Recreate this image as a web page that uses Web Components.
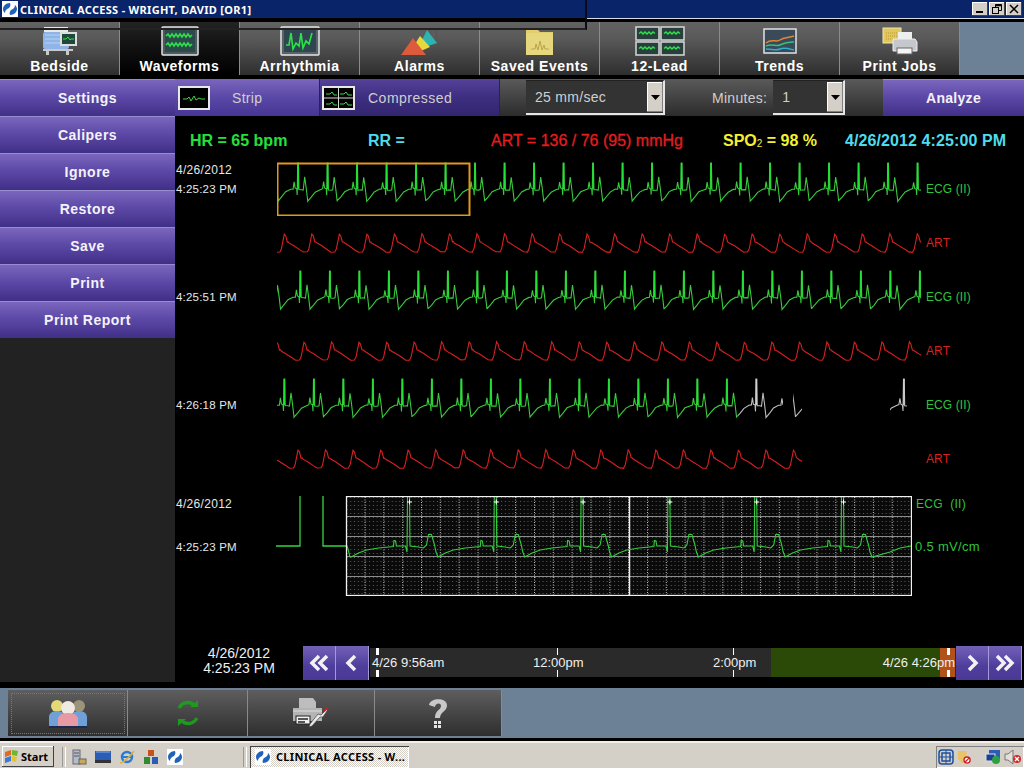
<!DOCTYPE html>
<html>
<head>
<meta charset="utf-8">
<title>Clinical Access</title>
<style>
  html, body { margin: 0; padding: 0; background: #000; height: 768px; overflow: hidden; font-family: "Liberation Sans", Arial, sans-serif; }
  .app { display: grid; grid-template-columns: 175px 849px; }
</style>
</head>
<body>
<title-bar></title-bar>
<tab-bar>
  <nav-tab label="Bedside"><svg slot="icon" width="40" height="32" viewBox="0 0 40 32"><rect x="4" y="2" width="24" height="5" fill="#e8e8e8"/><rect x="3" y="7" width="26" height="17" rx="2" fill="#8fb4e8"/><path d="M5 10h22M5 14h22M5 18h22" stroke="#b9d2f2"/><path d="M3 24h30v2H3zM6 26h3v4H6zM26 26h3v4h-3z" fill="#c9c9c9"/><rect x="20" y="7" width="17" height="14" fill="#ddd"/><rect x="22" y="9" width="13" height="10" fill="#1e4a3c"/><path d="M23 14h3l2-2 2 3 1-1h3" stroke="#3ddc4a" fill="none"/></svg></nav-tab>
  <nav-tab label="Waveforms" active><svg slot="icon" width="40" height="32" viewBox="0 0 40 32"><rect x="2" y="2" width="36" height="28" rx="1" fill="#4c5a60" stroke="#e4e4e4" stroke-width="1.5"/><rect x="5" y="5" width="30" height="22" fill="#2d4a4a"/><path d="M6 11l2-2 2 3 2-3 2 3 2-3 2 3 2-3 2 3 2-3 2 3 2-3 2 3 2-2M6 20l2-2 2 3 2-3 2 3 2-3 2 3 2-3 2 3 2-3 2 3 2-3 2 3 2-2" stroke="#2ee04a" stroke-width="1.6" fill="none"/></svg></nav-tab>
  <nav-tab label="Arrhythmia"><svg slot="icon" width="40" height="32" viewBox="0 0 40 32"><rect x="1" y="2" width="38" height="28" rx="1" fill="#5a6468" stroke="#e4e4e4" stroke-width="1.5"/><rect x="4" y="5" width="32" height="22" fill="#2f4650"/><path d="M6 20h3l2-12 2 16 3-6 3 3 2-13 2 15 3-7 3 3 3-11" stroke="#2ee04a" stroke-width="1.6" fill="none"/></svg></nav-tab>
  <nav-tab label="Alarms"><svg slot="icon" width="40" height="32" viewBox="0 0 40 32"><path d="M29 4l7 1 1 10-3 4z" fill="none" stroke="#555"/><path d="M27 5l10 13-9 3-6-6z" fill="#2fb3b0"/><path d="M20 11l10 11-9 4-6-7z" fill="#e8d83a"/><path d="M13 13L26 30H1z" fill="#dd5a3c"/></svg></nav-tab>
  <nav-tab label="Saved Events"><svg slot="icon" width="40" height="32" viewBox="0 0 40 32"><path d="M6 4h11l3 3h13v23H6z" fill="#e2cf6c"/><rect x="6" y="8" width="27" height="22" fill="#e6d67e"/><path d="M11 24h4l1-5 2 6 2-9 2 9 2-5 1 4h4" stroke="#bba44a" fill="none"/></svg></nav-tab>
  <nav-tab label="12-Lead"><svg slot="icon" width="50" height="30" viewBox="0 0 50 30"><g fill="#27403c" stroke="#d8d8d8" stroke-width="1.5"><rect x="1" y="1" width="23" height="13"/><rect x="26" y="1" width="23" height="13"/><rect x="1" y="16" width="23" height="13"/><rect x="26" y="16" width="23" height="13"/></g><path d="M4 7.500l2-1.500 2 2 2-2 2 2 2-2 2 2 2-2 2 1.500M29 7.500l2-1.500 2 2 2-2 2 2 2-2 2 2 2-2 2 1.500M4 22.500l2-1.500 2 2 2-2 2 2 2-2 2 2 2-2 2 1.500M29 22.500l2-1.500 2 2 2-2 2 2 2-2 2 2 2-2 2 1.500" stroke="#32e04c" stroke-width="1.500" fill="none"/></svg></nav-tab>
  <nav-tab label="Trends"><svg slot="icon" width="36" height="28" viewBox="0 0 36 28"><rect x="2" y="2" width="32" height="24" fill="#3a4a58" stroke="#e2e2e2" stroke-width="1.500"/><path d="M4 16c6-5 10 0 14-3s8-2 14-4" stroke="#e08830" stroke-width="1.500" fill="none"/><path d="M4 19c6-3 10 1 14-1s8-3 14-3" stroke="#38c080" stroke-width="1.500" fill="none"/><path d="M4 22c6 0 10 2 14 0s10 0 14 1" stroke="#30b0d0" stroke-width="1.500" fill="none"/></svg></nav-tab>
  <nav-tab label="Print Jobs"><svg slot="icon" width="40" height="30" viewBox="0 0 40 30"><rect x="3" y="2" width="18" height="15" fill="#e2c75c" stroke="#f0e6b0"/><path d="M6 7h12M6 10h12M6 13h12" stroke="#b99a30" stroke-dasharray="1 1"/><rect x="18" y="6" width="14" height="7" fill="#eee"/><path d="M13 13h22l2 3v9H13v-9z" fill="#c4c8cc" stroke="#eee"/><rect x="17" y="22" width="15" height="6" fill="#f4f4f4" stroke="#666"/></svg></nav-tab>
</tab-bar>
<div class="app">
  <side-menu>
    <menu-button>Settings</menu-button>
    <menu-button>Calipers</menu-button>
    <menu-button>Ignore</menu-button>
    <menu-button>Restore</menu-button>
    <menu-button>Save</menu-button>
    <menu-button>Print</menu-button>
    <menu-button>Print Report</menu-button>
  </side-menu>
  <div>
    <tool-bar></tool-bar>
    <vital-row></vital-row>
    <wave-strip kind="ecg" date="4/26/2012" time="4:25:23 PM" phase="297.7" selection></wave-strip>
    <wave-strip kind="art" phase="284.3"></wave-strip>
    <wave-strip kind="ecg" time="4:25:51 PM" phase="300"></wave-strip>
    <wave-strip kind="art" phase="304"></wave-strip>
    <wave-strip kind="ecg" time="4:26:18 PM" phase="284" gaps></wave-strip>
    <wave-strip kind="art" phase="298" stop="802"></wave-strip>
    <ecg-detail></ecg-detail>
    <time-nav></time-nav>
  </div>
</div>
<foot-bar></foot-bar>
<task-bar></task-bar>

<script>
const SIEVE = `<svg width="16" height="16" viewBox="0 0 16 16"><rect width="16" height="16" fill="#fff"/><path d="M8 2C4 2 1 5 1 8c0 2 1 3 2 4 0-3 2-4 4-5 1-1 2-3 1-5zM8 14c4 0 7-3 7-6 0-2-1-3-2-4 0 3-2 4-4 5-1 1-2 3-1 5z" fill="#1f62b8"/></svg>`

class TitleBar extends HTMLElement {
  constructor () {
    super()
    this.attachShadow({ mode: 'open' })
  }

  connectedCallback () {
    this.shadowRoot.innerHTML = `
      <style>
        :host { display: block; height: 18px; background: #0a246a; position: relative; border-bottom: 1px solid #d8dce4; }
        .bar { display: flex; align-items: center; height: 18px; padding-left: 2px; gap: 2px; color: #fff; font: bold 11px "Noto Sans", Tahoma, sans-serif; letter-spacing: .3px; }
        .btns { margin-left: auto; display: flex; margin-right: 2px; gap: 0; }
        .btns i { display: block; width: 16px; height: 14px; margin-left: 1px; background: #d4d0c8; box-shadow: inset -1px -1px #404040, inset 1px 1px #fff; }
        .btns svg { display: block; }
        .ghost { position: absolute; left: 0; top: 0; width: 585px; height: 28px; border-right: 2px solid #0b0b18; border-bottom: 2px solid #222; background: linear-gradient(transparent 18px, #000 18px, #000 19px, transparent 19px); }
      </style>
      <div class="bar">
        ${SIEVE}<span>CLINICAL ACCESS - WRIGHT, DAVID [OR1]</span>
        <div class="btns">
          <i><svg width="16" height="14"><rect x="4" y="9" width="7" height="2" fill="#000"/></svg></i>
          <i><svg width="16" height="14" fill="none" stroke="#000"><path d="M6.500 5.500V2.500h6v6h-3"/><path d="M6 3.500h7" stroke-width="1.500"/><rect x="3.500" y="5.500" width="6" height="6"/></svg></i>
          <i><svg width="16" height="14" stroke="#000" stroke-width="1.500"><path d="M4 3l8 8M12 3l-8 8"/></svg></i>
        </div>
      </div>
      <div class="ghost"></div>
    `
  }
}

class TabBar extends HTMLElement {
  constructor () {
    super()
    this.attachShadow({ mode: 'open' })
  }

  connectedCallback () {
    this.shadowRoot.innerHTML = `
      <style>
        :host { display: flex; margin-top: 3px; height: 53px; margin-bottom: 4px; background: #6c8096; }
      </style>
      <slot></slot>
    `
  }
}

class NavTab extends HTMLElement {
  constructor () {
    super()
    this.attachShadow({ mode: 'open' })
  }

  connectedCallback () {
    this.shadowRoot.innerHTML = `
      <style>
        :host { display: flex; flex-direction: column; align-items: center; width: 120px; box-sizing: border-box; height: 53px; border-right: 1px solid #8a8a8a; background: linear-gradient(#626262, #5a5a5a 30%, #2e2e2e); color: #fff; font: bold 14px "Liberation Sans", Arial, sans-serif; letter-spacing: .55px; }
        :host([active]) { background: linear-gradient(#232323, #141414 40%, #000); }
        .icon { height: 36px; display: flex; align-items: center; justify-content: center; padding-top: 2px; box-sizing: border-box; }
        .label { line-height: 16px; white-space: nowrap; }
      </style>
      <div class="icon"><slot name="icon"></slot></div>
      <div class="label">${this.getAttribute('label')}</div>
    `
  }
}

class SideMenu extends HTMLElement {
  constructor () {
    super()
    this.attachShadow({ mode: 'open' })
  }

  connectedCallback () {
    this.shadowRoot.innerHTML = `
      <style>
        :host { display: flex; flex-direction: column; height: 603px; background: #222; }
      </style>
      <slot></slot>
    `
  }
}

class MenuButton extends HTMLElement {
  constructor () {
    super()
    this.attachShadow({ mode: 'open' })
  }

  connectedCallback () {
    this.shadowRoot.innerHTML = `
      <style>
        :host { display: flex; align-items: center; justify-content: center; height: 37px; box-sizing: border-box; background: linear-gradient(#7a66bd, #5d4aa8 45%, #402f87); border-top: 1px solid #9a8cd0; color: #f4f2fa; font: bold 14px "Liberation Sans", Arial, sans-serif; letter-spacing: .5px; }
      </style>
      <slot></slot>
    `
  }
}

class ToolBar extends HTMLElement {
  constructor () {
    super()
    this.attachShadow({ mode: 'open' })
  }

  connectedCallback () {
    const arrow = '<b class="arrow"><svg width="9" height="5"><path d="M0 0h9L4.500 5z" fill="#000"/></svg></b>'
    this.shadowRoot.innerHTML = `
      <style>
        :host { display: flex; height: 37px; align-items: stretch; background: linear-gradient(#5a5a5a, #2c2c2c); color: #cfcfcf; font: 14px "Liberation Sans", Arial, sans-serif; letter-spacing: .3px; }
        .mode { display: flex; align-items: center; box-sizing: border-box; border-right: 1px solid #2a2060; background: linear-gradient(#7a66bd, #5a48a6 50%, #463594); }
        .strip { width: 145px; padding-left: 3px; }
        .comp { width: 180px; padding-left: 2px; background: linear-gradient(#554299, #3d2e80 50%, #33266f); }
        .mode svg { display: block; }
        .strip span { margin-left: 22px; }
        .comp span { margin-left: 13px; letter-spacing: .5px; }
        .select { display: flex; align-items: center; box-sizing: border-box; height: 35px; margin-top: 1px; padding-left: 9px; background: #333; border-right: 2px solid #e6e6e6; border-bottom: 2px solid #e6e6e6; border-top: 1px solid #222; }
        .rate { width: 139px; margin-left: 26px; }
        .mins { width: 72px; margin-left: 6px; }
        .arrow { margin-left: auto; width: 16px; height: 30px; background: #d4d0c8; display: flex; align-items: center; justify-content: center; box-shadow: inset -1px -1px #808080, inset 1px 1px #fff; }
        .label { margin-left: 47px; align-self: center; }
        .analyze { margin-left: auto; width: 141px; display: flex; align-items: center; justify-content: center; background: linear-gradient(#7a66bd, #5d4aa8 45%, #402f87); color: #f4f2fa; font-weight: bold; border-top: 1px solid #9a8cd0; box-sizing: border-box; letter-spacing: .3px; }
      </style>
      <div class="mode strip">
        <svg width="32" height="24"><rect x="1" y="1" width="30" height="22" fill="#000" stroke="#e8e8e8" stroke-width="2"/><path d="M5 13h4l2-2 2 4 3-5 2 4 3-2 2 1h4" stroke="#36d84a" fill="none"/></svg>
        <span>Strip</span>
      </div>
      <div class="mode comp">
        <svg width="33" height="24"><rect x="1" y="1" width="31" height="22" fill="#000" stroke="#e8e8e8" stroke-width="2"/><path d="M16.500 2v20M2 12h29" stroke="#d8d8d8"/><path d="M4 8h4l2-2 2 3h3M18 8h4l2-2 2 3h4M4 18h4l2-2 2 3h3M18 18h4l2-2 2 3h4" stroke="#36d84a" fill="none"/></svg>
        <span>Compressed</span>
      </div>
      <div class="select rate">25 mm/sec${arrow}</div>
      <div class="label">Minutes:</div>
      <div class="select mins">1${arrow}</div>
      <div class="analyze">Analyze</div>
    `
  }
}

class VitalRow extends HTMLElement {
  constructor () {
    super()
    this.attachShadow({ mode: 'open' })
  }

  connectedCallback () {
    this.shadowRoot.innerHTML = `
      <style>
        :host { display: grid; grid-template-columns: 178px 123px 232px 122px auto; align-items: center; height: 42px; padding-top: 4px; padding-left: 15px; font: bold 16px "Liberation Sans", Arial, sans-serif; white-space: nowrap; }
        sub { font-size: 10px; line-height: 0; vertical-align: -1px; font-weight: normal; }
      </style>
      <span style="color:#24e03c">HR = 65 bpm</span>
      <span style="color:#4edcec">RR =</span>
      <span style="color:#e41e1e;font-weight:normal;-webkit-text-stroke:.3px #e41e1e">ART = 136 / 76 (95) mmHg</span>
      <span style="color:#f4f030">SPO<sub>2</sub> = 98 %</span>
      <span style="color:#4edcec;letter-spacing:.1px">4/26/2012 4:25:00 PM</span>
    `
  }
}

// one heartbeat, offsets from the R spike, y measured from the row top
const ECG_BEAT = [[-19.5, 39], [-16, 35], [-12, 30], [-7, 27.5], [-4.6, 27], [-3.6, 20], [-2.6, 26], [-1, 27], [-0.5, 33], [0, 1], [0.7, 1], [1.2, 28], [4, 28], [5.5, 28], [7, 15], [8.5, 26], [10, 39]]
const ART_BEAT = [[-4.5, 36], [-3, 33], [0, 18], [1.5, 20], [3, 26], [4, 26], [5, 27], [10, 30], [16, 34], [19, 36], [23, 36]]

function seeded (n) {
  const v = Math.sin(n * 12.9898) * 43758.5453
  return v - Math.floor(v)
}

class WaveStrip extends HTMLElement {
  constructor () {
    super()
    this.attachShadow({ mode: 'open' })
  }

  firstBeat (period) {
    let s = parseFloat(this.getAttribute('phase'))
    while (s > 277 - period) s -= period
    return s
  }

  tracePoints () {
    const ecg = this.getAttribute('kind') === 'ecg'
    const period = ecg ? 29.5 : 27.52
    const beat = ecg ? ECG_BEAT : ART_BEAT
    const s = this.firstBeat(period)
    const pts = []
    for (let k = 0; s + period * k < 960; k++) {
      beat.forEach(([dx, y], i) => {
        const j = ecg && i !== 9 && i !== 10 ? (seeded(k * 31 + i) - 0.5) * 0.8 : (ecg ? 0 : (seeded(k * 7 + i) - 0.5) * 0.6)
        pts.push((s + period * k + dx).toFixed(1) + ',' + (y + j).toFixed(1))
      })
    }
    return pts.join(' ')
  }

  spikes () {
    const s = this.firstBeat(29.5)
    let d = ''
    for (let k = 0; s + 29.5 * k < 960; k++) d += `M${(s + 29.5 * k + 0.35).toFixed(1)} 1V27`
    return d
  }

  connectedCallback () {
    const ecg = this.getAttribute('kind') === 'ecg'
    const pts = this.tracePoints()
    const stop = parseFloat(this.getAttribute('stop')) || 921
    const draw = (clip, wave, spike) => `
      <polyline clip-path="url(#${clip})" points="${pts}" fill="none" stroke="${wave}" stroke-width="1.1"/>
      ${ecg ? `<path clip-path="url(#${clip})" d="${this.spikes()}" stroke="${spike}" stroke-width="1.5"/>` : ''}
    `
    let body
    if (this.hasAttribute('gaps')) {
      body = `
        <defs>
          <clipPath id="g"><rect x="277" y="0" width="461" height="54"/></clipPath>
          <clipPath id="w"><rect x="738" y="0" width="45" height="54"/><rect x="793" y="0" width="9" height="54"/><rect x="890" y="0" width="17" height="54"/></clipPath>
        </defs>
        ${draw('g', '#38cc3c', '#1fe434')}
        ${draw('w', '#bdbdbd', '#cfcfcf')}
      `
    } else {
      body = `
        <defs><clipPath id="c"><rect x="277" y="0" width="${stop - 277}" height="54"/></clipPath></defs>
        ${draw('c', ecg ? '#38cc3c' : '#d8201f', '#1fe434')}
      `
    }
    if (this.hasAttribute('selection')) {
      body += '<rect x="277.500" y="1.500" width="192" height="52" fill="none" stroke="#e0991c" stroke-width="2"/>'
    }
    this.shadowRoot.innerHTML = `
      <style>
        :host { display: grid; grid-template-columns: 102px 645px auto; height: 54px; color: #e8e8e8; font: 12px "Liberation Sans", Arial, sans-serif; }
        .when { padding-left: 1px; }
        .date { height: 16px; line-height: 16px; letter-spacing: .3px; }
        .time { margin-top: 3px; line-height: 16px; font-size: 11.500px; letter-spacing: .2px; }
        svg { display: block; }
        .tag { padding-left: 4px; line-height: 54px; color: ${ecg ? '#2ec43c' : '#d8201f'}; letter-spacing: .1px; }
      </style>
      <div class="when">
        <div class="date">${this.getAttribute('date') || ''}</div>
        <div class="time">${this.getAttribute('time') || ''}</div>
      </div>
      <svg width="645" height="54" viewBox="277 0 645 54">${body}</svg>
      <div class="tag">${ecg ? 'ECG (II)' : 'ART'}</div>
    `
  }
}

class EcgDetail extends HTMLElement {
  constructor () {
    super()
    this.attachShadow({ mode: 'open' })
  }

  trace () {
    const beat = [[-57.3, 61], [-50, 57], [-42, 54], [-30, 52], [-20, 51], [-15, 50.5], [-14.5, 44.5], [-13, 45], [-12, 50], [-3, 50], [-1.5, 56], [-1, 0], [1, 0], [1.5, 50], [10, 51], [15, 52], [18, 49], [20, 38.5], [23, 38.5], [26, 49], [27.5, 56], [29.5, 61]]
    const pts = ['346.5,50', '347.5,51', '350,61']
    for (let k = 0; k < 6; k++) {
      const s = 408.5 + 86.8 * k
      beat.forEach(([dx, y]) => pts.push((s + dx).toFixed(1) + ',' + y))
    }
    pts.push('890,56', '900,52', '911,50')
    return pts.join(' ')
  }

  connectedCallback () {
    let vlines = ''
    for (let x = 365; x < 911; x += 18.83) vlines += `<path d="M${x.toFixed(1)} 1V99" stroke="#c8c8c8" stroke-dasharray="1 1.500"/>`
    let marks = ''
    for (let k = 0; k < 6; k++) marks += `<path d="M${(409.5 + 86.8 * k).toFixed(1)} 3.500v5M${(407 + 86.8 * k).toFixed(1)} 6h5" stroke="#fff"/>`
    this.shadowRoot.innerHTML = `
      <style>
        :host { display: grid; grid-template-columns: 101px 636px auto; height: 100px; margin-top: 10px; color: #e8e8e8; font: 12px "Liberation Sans", Arial, sans-serif; }
        .when { padding-left: 1px; display: flex; flex-direction: column; gap: 27px; }
        .when div { line-height: 16px; letter-spacing: .3px; }
        svg { display: block; }
        .tag { color: #2ec43c; padding-left: 4px; display: flex; flex-direction: column; gap: 27px; letter-spacing: .3px; white-space: nowrap; }
        .tag div { line-height: 16px; }
      </style>
      <div class="when"><div>4/26/2012</div><div style="font-size:11.500px;letter-spacing:.2px">4:25:23 PM</div></div>
      <svg width="636" height="100" viewBox="276 0 636 100">
        <defs>
          <pattern id="dots" x="346.500" y="1" width="3.770" height="4" patternUnits="userSpaceOnUse"><rect width="1" height="1" fill="#5c5c5c"/></pattern>
        </defs>
        <path d="M276 50h24V0M323 0V50h24" fill="none" stroke="#35d53d" stroke-width="1.300"/>
        <rect x="347" y="1" width="564" height="98" fill="#0a0a0a"/>
        <rect x="347" y="1" width="564" height="98" fill="url(#dots)"/>
        ${vlines}
        <path d="M347 20.500h564M347 40.500h564M347 60.500h564M347 80.500h564" stroke="#8c8c8c"/>
        <path d="M629.500 1V99" stroke="#f0f0f0" stroke-width="1.500"/>
        <polyline points="${this.trace()}" fill="none" stroke="#35cc3d" stroke-width="1.100"/>
        ${marks}
        <rect x="346.500" y=".500" width="565" height="99" fill="none" stroke="#f2f2f2" stroke-width="1.300"/>
      </svg>
      <div class="tag"><div>ECG &nbsp;(II)</div><div style="margin-left:-1px;font-size:13px">0.5 mV/cm</div></div>
    `
  }
}

class TimeNav extends HTMLElement {
  constructor () {
    super()
    this.attachShadow({ mode: 'open' })
  }

  connectedCallback () {
    const dbl = d => `<svg width="24" height="20" viewBox="0 0 24 20" fill="none" stroke="#f2f2f2" stroke-width="3.500"><path d="${d}"/></svg>`
    this.shadowRoot.innerHTML = `
      <style>
        :host { display: grid; grid-template-columns: 128px 33px 33px 587px 33px 33px; height: 34px; margin-top: 50px; color: #f0f0f0; font: 13px "Liberation Sans", Arial, sans-serif; }
        .when { text-align: center; font-size: 14px; line-height: 15px; white-space: nowrap; }
        .btn { display: flex; align-items: center; justify-content: center; background: linear-gradient(#7361b8, #4f3d9c 60%, #4a3a96); border-right: 1px solid #a498d6; box-sizing: border-box; }
        .track { position: relative; margin: 2px 0 3px 1px; display: flex; align-items: center; justify-content: space-between; background: #2a2a2a; padding: 0 1px 0 2px; min-width: 0; white-space: nowrap; }
        .track span { position: relative; }
        .fill { position: absolute; top: 0; bottom: 0; left: 401px; width: 169px; background: #2b4a08; }
        .end { position: absolute; top: 0; bottom: 0; left: 570px; width: 15px; background: #b0521a; }
        .tick { position: absolute; top: 0; bottom: 0; width: 1px; background: linear-gradient(#fff 7px, transparent 7px, transparent 22px, #fff 22px); }
        .thick { width: 3px; }
        .track .mid { position: absolute; }
      </style>
      <div class="when">4/26/2012<br>4:25:23 PM</div>
      <div class="btn">${dbl('M12 3L5 10l7 7M20 3l-7 7 7 7')}</div>
      <div class="btn">${dbl('M15 3L8 10l7 7')}</div>
      <div class="track">
        <div class="fill"></div>
        <div class="end"></div>
        <i class="tick thick" style="left:6px"></i>
        <i class="tick" style="left:187px"></i>
        <i class="tick" style="left:363px"></i>
        <i class="tick thick" style="left:577px"></i>
        <span>4/26 9:56am</span>
        <span class="mid" style="left:163px">12:00pm</span>
        <span class="mid" style="left:343px">2:00pm</span>
        <span>4/26 4:26pm</span>
      </div>
      <div class="btn">${dbl('M9 3l7 7-7 7')}</div>
      <div class="btn">${dbl('M4 3l7 7-7 7M12 3l7 7-7 7')}</div>
    `
  }
}

class FootBar extends HTMLElement {
  constructor () {
    super()
    this.attachShadow({ mode: 'open' })
  }

  connectedCallback () {
    this.shadowRoot.innerHTML = `
      <style>
        :host { display: flex; height: 48px; padding-top: 2px; padding-left: 8px; margin-top: 6px; background: #6c8096; }
        .tab { display: flex; align-items: center; justify-content: center; box-sizing: border-box; height: 46px; border-right: 1px solid #8a8a8a; background: linear-gradient(#5e5e5e, #2e2e2e); width: 120px; }
        .wide { width: 127px; }
        .focus { position: relative; }
        .focus::after { content: ""; position: absolute; left: 3px; right: 2px; top: 3px; bottom: 2px; border: 1px dotted #777; }
      </style>
      <div class="tab focus">
        <svg width="40" height="32" viewBox="0 0 40 32"><circle cx="9" cy="9" r="6" fill="#e4d878"/><circle cx="31" cy="9" r="6" fill="#9c9478"/><path d="M1 30V20c0-4 4-6 8-6s8 2 8 6v10zM23 30V20c0-4 4-6 8-6s8 2 8 6v10z" fill="#6fa0d8"/><circle cx="20" cy="11" r="7" fill="#efeae2"/><path d="M10 30V22c0-4 5-6 10-6s10 2 10 6v8z" fill="#e89aa4"/><path d="M1 30h38" stroke="#1c2a50" stroke-width="2"/></svg>
      </div>
      <div class="tab">
        <svg width="24" height="30" viewBox="0 0 24 30" fill="none" stroke="#1e9a1e" stroke-width="3.500"><path d="M3 10C7 3 15 3 19 8"/><path d="M14 9h8V2z" fill="#1e9a1e" stroke="none"/><path d="M21 20c-4 7-12 7-16 2"/><path d="M10 21H2v7z" fill="#1e9a1e" stroke="none"/></svg>
      </div>
      <div class="tab wide">
        <svg width="38" height="32" viewBox="0 0 38 32"><path d="M7 1h14l3 4v8H7z" fill="#bdbdbd"/><path d="M1 11h29v13H1z" fill="#b4b4b4"/><path d="M1 14h29" stroke="#dedede"/><rect x="4" y="19" width="14" height="8" fill="#f0f0f0" stroke="#222"/><path d="M6 22h10M6 25h7" stroke="#222" stroke-width="1.500"/><path d="M35 12l-6 6-3-1-8 10-1 3 3-1 8-9 3 0 4-6" fill="#e8e8e8" stroke="#444" stroke-width=".7"/><path d="M32 14l4-3" stroke="#c22" stroke-width="2"/></svg>
      </div>
      <div class="tab wide">
        <svg width="22" height="33" viewBox="0 0 22 33"><path d="M2 8C3 1 19 0 20 8c.5 6-7 7-7 13H8c0-8 6-8 6-12 0-4-6-3-6 1z" fill="#c8c8c8"/><rect x="7" y="24" width="7" height="7" fill="#e4e4e4"/><path d="M7 27.500h7M10.500 24v7" stroke="#333"/></svg>
      </div>
    `
  }
}

class TaskBar extends HTMLElement {
  constructor () {
    super()
    this.attachShadow({ mode: 'open' })
  }

  connectedCallback () {
    this.shadowRoot.innerHTML = `
      <style>
        :host { display: flex; align-items: center; box-sizing: border-box; height: 29px; margin-top: 3px; background: #d4d0c8; border-top: 2px solid #f0eee8; color: #000; font: bold 11px "Noto Sans", Tahoma, sans-serif; }
        .start { display: flex; align-items: center; gap: 1px; box-sizing: border-box; width: 52px; height: 21px; margin-left: 2px; padding-left: 2px; box-shadow: inset -1px -1px #404040, inset 1px 1px #fff; }
        .sep { width: 2px; height: 20px; margin: 0 5px 0 8px; border-left: 1px solid #999; border-right: 1px solid #fff; }
        .quick { display: flex; align-items: center; gap: 8px; width: 172px; }
        .quick svg { display: block; }
        .app { display: flex; align-items: center; gap: 5px; box-sizing: border-box; width: 159px; height: 22px; padding-left: 5px; background: repeating-conic-gradient(#fff 0 25%, #d4d0c8 0 50%) 0 0 / 2px 2px; box-shadow: inset 1px 1px #404040, inset -1px -1px #fff; letter-spacing: .3px; }
        .tray { margin-left: auto; display: flex; align-items: center; gap: 3px; height: 22px; padding: 0 2px 0 2px; margin-right: 0; box-shadow: inset 1px 1px #808080, inset -1px -1px #fff; }
        .tray svg { display: block; }
      </style>
      <div class="start">
        <svg width="16" height="15" viewBox="0 0 16 15"><path d="M1 3l6-2v5l-6 2z" fill="#e06a20"/><path d="M8 1l6 1-1 5-5-1z" fill="#6ab830"/><path d="M1 9l6-2v5l-6 2z" fill="#3a7ad8"/><path d="M8 7l5 1-1 5-4-1z" fill="#e8c030"/></svg>
        <span>Start</span>
      </div>
      <div class="sep"></div>
      <div class="quick">
        <svg width="16" height="16" viewBox="0 0 16 16"><rect x="2" y="1" width="7" height="14" fill="#b4bcc8" stroke="#667"/><path d="M3 4h5M3 7h5" stroke="#556"/><rect x="8" y="10" width="7" height="5" fill="#c8a860" stroke="#665"/></svg>
        <svg width="16" height="14" viewBox="0 0 16 14"><rect y="1" width="16" height="9" fill="#2a5cb8"/><rect y="10" width="16" height="3" fill="#333"/><path d="M1 2h14" stroke="#8ab0e8"/></svg>
        <svg width="16" height="16" viewBox="0 0 16 16"><circle cx="8" cy="8" r="5" fill="none" stroke="#2a7ad8" stroke-width="2.500"/><path d="M3 8h10" stroke="#2a7ad8" stroke-width="2"/><path d="M1 14C4 14 12 7 15 2" fill="none" stroke="#e0b030" stroke-width="1.500"/></svg>
        <svg width="16" height="16" viewBox="0 0 16 16"><rect x="5" y="1" width="6" height="6" fill="#c8501c"/><rect x="1" y="8" width="6" height="7" fill="#2f8a30"/><rect x="9" y="8" width="6" height="7" fill="#2a5cb8"/></svg>
        ${SIEVE}
      </div>
      <div class="sep" style="margin:0 3px 0 0"></div>
      <div class="app">${SIEVE}<span>CLINICAL ACCESS - W...</span></div>
      <div class="tray">
        <svg width="16" height="16" viewBox="0 0 16 16" fill="none" stroke="#1c4ea0" stroke-width="1.500"><rect x="1" y="1" width="14" height="14" rx="3"/><rect x="4" y="4" width="8" height="8"/><path d="M8 1v14M1 8h14" stroke-width="1"/></svg>
        <svg width="14" height="16" viewBox="0 0 16 16"><path d="M1 1h10v9l-5 5-5-5z" fill="#e8c468"/><circle cx="11.500" cy="11.500" r="3.500" fill="#fff" stroke="#d02020" stroke-width="1.500"/><path d="M9 14l5-5" stroke="#d02020" stroke-width="1.500"/></svg>
        <span style="width:8px"></span>
        <svg width="16" height="16" viewBox="0 0 16 16"><rect x="4" y="1" width="11" height="9" fill="#2a5cb8"/><rect x="1" y="5" width="9" height="7" fill="#1a4090" stroke="#dde"/><circle cx="11" cy="11" r="4" fill="#2aa040"/></svg>
        <svg width="18" height="16" viewBox="0 0 18 16"><path d="M1 5h3l5-4v14l-5-4H1z" fill="#e4e0d8" stroke="#777"/><circle cx="13" cy="10" r="4" fill="#d02828"/><path d="M11 8l4 4M15 8l-4 4" stroke="#fff" stroke-width="1.300"/></svg>
      </div>
    `
  }
}

customElements.define('title-bar', TitleBar)
customElements.define('tab-bar', TabBar)
customElements.define('nav-tab', NavTab)
customElements.define('side-menu', SideMenu)
customElements.define('menu-button', MenuButton)
customElements.define('tool-bar', ToolBar)
customElements.define('vital-row', VitalRow)
customElements.define('wave-strip', WaveStrip)
customElements.define('ecg-detail', EcgDetail)
customElements.define('time-nav', TimeNav)
customElements.define('foot-bar', FootBar)
customElements.define('task-bar', TaskBar)
</script>
</body>
</html>
